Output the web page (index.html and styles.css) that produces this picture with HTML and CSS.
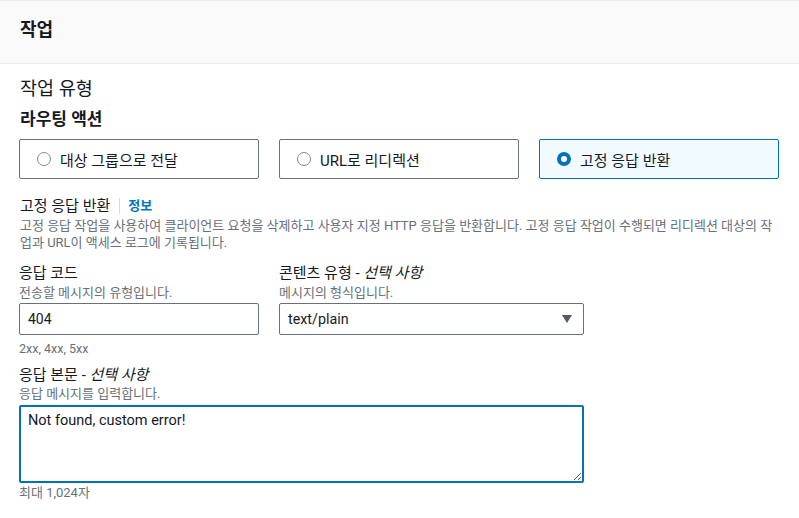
FILE: index.html
```html
<!DOCTYPE html>
<html lang="ko">
<head>
    <meta charset="UTF-8">
    <meta name="viewport" content="width=device-width, initial-scale=1.0">
    <title>작업</title>
    <link rel="stylesheet" href="styles.css">
</head>
<body>

    <div class="panel">
        <div class="panel-header">
            <h2>작업</h2>
        </div>

        <div class="panel-body">
            <div class="section-title">작업 유형</div>
            <div class="group-title">라우팅 액션</div>

            <!-- 라우팅 액션 선택 -->
            <div class="tiles">
                <label class="tile">
                    <span class="radio"></span>
                    <span>대상 그룹으로 전달</span>
                </label>
                <label class="tile">
                    <span class="radio"></span>
                    <span>URL로 리디렉션</span>
                </label>
                <label class="tile selected">
                    <span class="radio"></span>
                    <span>고정 응답 반환</span>
                </label>
            </div>

            <div class="field-head">
                <span class="field-label">고정 응답 반환</span>
                <span class="divider"></span>
                <a class="info-link" href="#">정보</a>
            </div>
            <p class="desc">고정 응답 작업을 사용하여 클라이언트 요청을 삭제하고 사용자 지정 HTTP 응답을 반환합니다. 고정 응답 작업이 수행되면 리디렉션 대상의 작업과 URL이 액세스 로그에 기록됩니다.</p>

            <div class="form">
                <div class="field">
                    <div class="field-label">응답 코드</div>
                    <div class="hint">전송할 메시지의 유형입니다.</div>
                    <input class="input" type="text" value="404">
                    <div class="constraint latin">2xx, 4xx, 5xx</div>
                </div>

                <div class="field">
                    <div class="field-label">콘텐츠 유형 - <i>선택 사항</i></div>
                    <div class="hint">메시지의 형식입니다.</div>
                    <div class="select">
                        <span>text/plain</span>
                        <svg width="10" height="8" viewBox="0 0 10 8"><path d="M0 0h10L5 8z" fill="#545b64"/></svg>
                    </div>
                </div>

                <div class="field wide">
                    <div class="field-label">응답 본문 - <i>선택 사항</i></div>
                    <div class="hint">응답 메시지를 입력합니다.</div>
                    <textarea class="textarea">Not found, custom error!</textarea>
                    <div class="constraint">최대 1,024자</div>
                </div>
            </div>
        </div>
    </div>

</body>
</html>
```

FILE: styles.css
```css
body {
    margin: 0;
    font-family: Roboto, "Noto Sans CJK KR", sans-serif;
    color: #16191f;
    background-color: white;
}

/* 패널 헤더 */
.panel-header {
    height: 62px;
    padding-left: 20px;
    background-color: #fafafa;
    border-top: 1px solid #eaeded;
    border-bottom: 1px solid #eaeded;
}

.panel-header h2 {
    margin: 0;
    font-size: 18px;
    font-weight: bold;
    line-height: 58px;
}

.panel-body {
    padding: 0 20px 0 19px;
}

.section-title {
    margin-top: 13px;
    padding-left: 1px;
    font-size: 18.5px;
    line-height: 24px;
}

.group-title {
    margin-top: 8px;
    padding-left: 1px;
    font-size: 17px;
    font-weight: bold;
    line-height: 20px;
}

/* 타일형 라디오 버튼 */
.tiles {
    display: grid;
    grid-template-columns: repeat(3, 240px);
    gap: 20px;
    margin-top: 10px;
}

.tile {
    display: flex;
    align-items: center;
    gap: 9px;
    height: 38px;
    padding-left: 17px;
    border: 1px solid #687078;
    border-radius: 2px;
    font-size: 15px;
}

.tile.selected {
    background-color: #f1faff;
    border-color: #0073bb;
}

.radio {
    box-sizing: border-box;
    width: 14px;
    height: 14px;
    border: 1.5px solid #7d8998;
    border-radius: 50%;
    background-color: white;
}

.tile.selected .radio {
    border: 4px solid #0073bb;
}

.field-head {
    display: flex;
    align-items: center;
    height: 20px;
    margin-top: 17px;
    padding-left: 1px;
}

.divider {
    width: 1px;
    height: 16px;
    margin: 0 8px 0 9px;
    background-color: #d5dbdb;
}

.info-link {
    font-size: 13px;
    font-weight: bold;
    line-height: 20px;
    color: #0073bb;
    text-decoration: none;
}

.field-label {
    font-size: 15px;
    line-height: 20px;
}

.desc {
    margin: 1px 0 0 0;
    padding-left: 1px;
    font-size: 13px;
    line-height: 17px;
    color: #687078;
}

/* 입력 폼 */
.form {
    display: grid;
    grid-template-columns: 240px 305px;
    column-gap: 20px;
    margin-top: 12px;
}

.field.wide {
    grid-column: 1 / 3;
    margin-top: 8px;
}

.hint {
    margin-top: 2px;
    font-size: 13px;
    line-height: 16px;
    color: #687078;
}

.field.wide .hint {
    margin-top: 1px;
}

.constraint {
    margin-top: 6px;
    font-size: 13px;
    line-height: 16px;
    color: #687078;
}

.constraint.latin {
    font-size: 12.5px;
}

.input,
.select {
    box-sizing: border-box;
    width: 100%;
    height: 32px;
    margin-top: 2px;
    padding: 0 8px;
    border: 1px solid #687078;
    border-radius: 2px;
    font-family: inherit;
    font-size: 14px;
    color: #16191f;
}

.select {
    display: flex;
    align-items: center;
    justify-content: space-between;
    padding-right: 11px;
    font-size: 14.3px;
}

.textarea {
    box-sizing: border-box;
    display: block;
    width: 565px;
    height: 78px;
    margin-top: 3px;
    padding: 4px 7px;
    border: 2px solid #0073bb;
    border-radius: 2px;
    font-family: inherit;
    font-size: 14.5px;
    line-height: 20px;
    color: #16191f;
    outline: none;
}

.field.wide .constraint {
    margin-top: 2px;
}
```
